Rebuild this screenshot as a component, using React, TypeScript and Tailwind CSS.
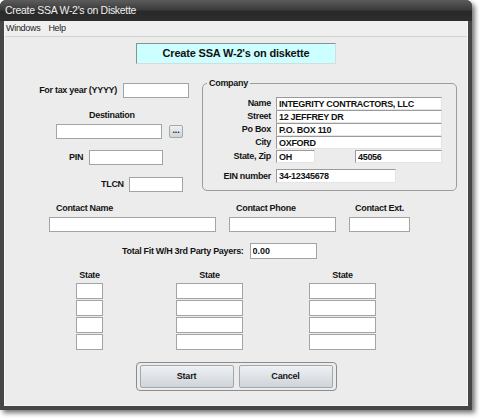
import React from "react";

// shared looks for the Swing-style widgets
const font = "font-['Liberation_Sans',Arial,sans-serif]";
const label = "text-[9px] leading-[11px] font-bold tracking-[-0.3px] text-[#141414] whitespace-nowrap";
const field = "block h-[15px] border border-[#a4a4a4] bg-white px-[2px] text-[9px] font-bold text-[#111] outline-none";
const coField =
  "block h-[13px] border border-[#9a9a9a] border-r-[#e4e4e4] border-b-[#e4e4e4] bg-white px-[2px] text-[9px] leading-[11px] font-bold tracking-[-0.3px] text-[#111] outline-none";
const btn =
  "flex items-center justify-center border border-[#a3a8ad] rounded-[2px] bg-gradient-to-b from-[#eef1f4] to-[#cfd4d8] text-[9px] font-bold tracking-[-0.2px] text-[#151515]";

type BoxProps = { w: string; value?: string; cls?: string };

const Box = ({ w, value = "", cls = field }: BoxProps) => (
  <input readOnly defaultValue={value} className={`${cls} ${w} ${font}`} />
);

const company = [
  { name: "Name", value: "INTEGRITY CONTRACTORS, LLC" },
  { name: "Street", value: "12 JEFFREY DR" },
  { name: "Po Box", value: "P.O. BOX 110" },
  { name: "City", value: "OXFORD" },
];

const StateColumn = ({ w }: { w: string }) => (
  <div className="flex flex-col items-center">
    <span className={label}>State</span>
    <div className="mt-[2px] flex flex-col gap-[1px]">
      {[0, 1, 2, 3].map((i) => (
        <input key={i} readOnly className={`block h-[16px] border border-[#a4a4a4] bg-white outline-none ${w}`} />
      ))}
    </div>
  </div>
);

export default function App() {
  return (
    <div className={`w-[481px] h-[419px] bg-white ${font}`}>
      {/* window frame */}
      <div className="w-[472px] h-[410px] flex flex-col rounded-t-[6px] bg-[#464646] shadow-[3px_3px_5px_rgba(0,0,0,0.55)]">
        {/* title bar */}
        <div className="h-[21px] flex items-center pl-[5px] rounded-t-[6px] bg-[linear-gradient(to_bottom,#5c5c5c,#3c3c3c_45%,#282828_55%,#2e2e2e)]">
          <span className="text-[10.5px] tracking-[-0.3px] text-[#efefef]">Create SSA W-2's on Diskette</span>
        </div>

        <div className="flex-1 flex flex-col mx-[4px] mb-[4px] border border-t-0 border-[#f7f7f7]">
          {/* menu bar */}
          <div className="h-[16px] flex items-center gap-[8px] pl-[1px] bg-[#efefef] border-b border-[#d2d2d2]">
            <span className="text-[9px] tracking-[-0.3px] text-[#222]">Windows</span>
            <span className="text-[9px] tracking-[-0.3px] text-[#222]">Help</span>
          </div>

          {/* content */}
          <div className="flex-1 flex flex-col bg-[#ececec]">
            <div className="mx-auto mt-[6px] w-[200px] h-[21px] flex items-center justify-center bg-[#ccffff] border border-t-[#8f8f8f] border-l-[#8f8f8f] border-r-[#dadada] border-b-[#dadada]">
              <span className="text-[11px] font-bold tracking-[-0.2px] text-[#111]">Create SSA W-2's on diskette</span>
            </div>

            {/* upper section: left fields + company group */}
            <div className="mt-[14px] flex">
              <div className="w-[197px] pt-[5px] flex flex-col">
                <div className="flex items-center gap-[6px]">
                  <span className={`${label} w-[112px] text-right`}>For tax year (YYYY)</span>
                  <Box w="w-[66px]" />
                </div>
                <span className={`${label} mt-[12px] pl-[84px]`}>Destination</span>
                <div className="mt-[3px] pl-[51px] flex items-center gap-[7px]">
                  <Box w="w-[106px]" />
                  <div className={`${btn} w-[14px] h-[13px] leading-none pb-[3px]`}>...</div>
                </div>
                <div className="mt-[11px] pl-[64px] flex items-center">
                  <span className={`${label} w-[20px]`}>PIN</span>
                  <Box w="w-[74px]" />
                </div>
                <div className="mt-[12px] pl-[96px] flex items-center">
                  <span className={`${label} w-[28px]`}>TLCN</span>
                  <Box w="w-[54px]" />
                </div>
              </div>

              <fieldset className="w-[255px] h-[113px] border border-[#9c9c9c] rounded-[5px]">
                <legend className={`${label} ml-[4px] px-[2px]`}>Company</legend>
                <div className="mt-[8px] grid grid-cols-[68px_166px] gap-x-[5px]">
                  {company.map((c) => (
                    <React.Fragment key={c.name}>
                      <span className={`${label} text-right leading-[13px]`}>{c.name}</span>
                      <Box w="w-[166px]" value={c.value} cls={coField} />
                    </React.Fragment>
                  ))}
                  <span className={`${label} text-right leading-[13px] mt-[1px]`}>State, Zip</span>
                  <div className="mt-[1px] flex justify-between">
                    <Box w="w-[39px]" value="OH" cls={coField} />
                    <Box w="w-[87px]" value="45056" cls={coField} />
                  </div>
                  <span className={`${label} text-right leading-[14px] mt-[6px]`}>EIN number</span>
                  <div className="mt-[6px]">
                    <Box w="w-[120px] h-[14px]" value="34-12345678" cls={coField} />
                  </div>
                </div>
              </fieldset>
            </div>

            {/* contact row */}
            <div className="mt-[11px] ml-[44px] flex gap-[13px]">
              <div className="flex flex-col">
                <span className={`${label} pl-[7px]`}>Contact Name</span>
                <div className="mt-[3px]"><Box w="w-[167px]" /></div>
              </div>
              <div className="flex flex-col">
                <span className={`${label} pl-[7px]`}>Contact Phone</span>
                <div className="mt-[3px]"><Box w="w-[107px]" /></div>
              </div>
              <div className="flex flex-col">
                <span className={`${label} pl-[6px]`}>Contact Ext.</span>
                <div className="mt-[3px]"><Box w="w-[61px]" /></div>
              </div>
            </div>

            <div className="mt-[11px] ml-[117px] flex items-center gap-[6px]">
              <span className={label}>Total Fit W/H 3rd Party Payers:</span>
              <Box w="w-[67px] h-[16px]" value="0.00" />
            </div>

            {/* state withholding columns */}
            <div className="mt-[11px] ml-[71px] flex">
              <StateColumn w="w-[27px]" />
              <div className="ml-[73px]"><StateColumn w="w-[67px]" /></div>
              <div className="ml-[66px]"><StateColumn w="w-[67px]" /></div>
            </div>

            {/* buttons */}
            <div className="mx-auto mt-[12px] w-[201px] h-[29px] flex items-center justify-center gap-[5px] border border-[#8c8c8c] rounded-[4px] bg-[#ececec]">
              <div className={`${btn} w-[94px] h-[23px]`}>Start</div>
              <div className={`${btn} w-[94px] h-[23px]`}>Cancel</div>
            </div>
          </div>
        </div>
      </div>
    </div>
  );
}
